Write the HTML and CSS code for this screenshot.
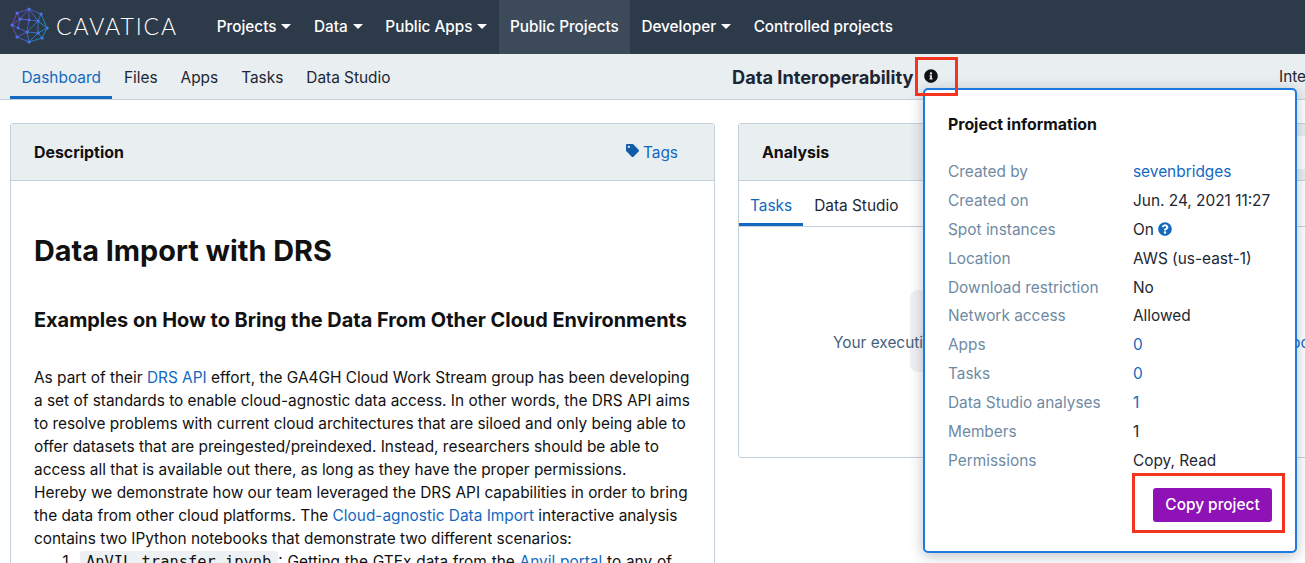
FILE: index.html
```html
<!DOCTYPE html>
<html lang="en">
<head>
    <meta charset="UTF-8">
    <meta name="viewport" content="width=device-width, initial-scale=1.0">
    <title>Data Interoperability</title>
    <link rel="stylesheet" href="styles.css">
</head>
<body>

<!-- Top navigation -->
<header class="topbar">
    <a class="logo">
        <svg class="logo-mark" width="40" height="40" viewBox="0 0 40 40">
            <defs>
                <linearGradient id="mark" x1="0" y1="0" x2="1" y2="0.4">
                    <stop offset="0" stop-color="#ad35ee"/>
                    <stop offset="0.5" stop-color="#5a62ea"/>
                    <stop offset="1" stop-color="#12aef0"/>
                </linearGradient>
            </defs>
            <path class="mesh" d="M19 2 7 6 2 18 7 30 19 35 32 31 37 21 31 7 19 2M7 6 10 12 19 13 28 14 31 7M19 2 19 13 10 12 2 18 8 21 17 25 7 30M10 12 8 21M19 2 10 12M19 2 28 14 37 21 28 26 32 31M28 14 28 26 17 25 19 35M19 13 17 25M28 14 17 25M28 26 19 35" stroke="url(#mark)"/>
            <g fill="url(#mark)">
                <circle cx="19" cy="2" r="1.6"/><circle cx="7" cy="6" r="1.6"/><circle cx="31" cy="7" r="1.6"/>
                <circle cx="10" cy="12" r="1.6"/><circle cx="19" cy="13" r="1.3"/><circle cx="28" cy="14" r="1.6"/>
                <circle cx="2" cy="18" r="1.6"/><circle cx="8" cy="21" r="1.3"/><circle cx="37" cy="21" r="1.6"/>
                <circle cx="17" cy="25" r="1.6"/><circle cx="28" cy="26" r="1.6"/><circle cx="7" cy="30" r="1.6"/>
                <circle cx="32" cy="31" r="1.6"/><circle cx="19" cy="35" r="1.6"/>
            </g>
        </svg>
        <span class="logo-text">CAVATICA</span>
    </a>
    <nav class="mainnav">
        <a>Projects <i class="caret"></i></a>
        <a>Data <i class="caret"></i></a>
        <a>Public Apps <i class="caret"></i></a>
        <a class="current">Public Projects</a>
        <a>Developer <i class="caret"></i></a>
        <a>Controlled projects</a>
    </nav>
</header>

<!-- Project tabs -->
<div class="subbar">
    <div class="tabs">
        <a class="active">Dashboard</a>
        <a>Files</a>
        <a>Apps</a>
        <a>Tasks</a>
        <a>Data Studio</a>
    </div>
    <div class="project-name">
        <strong>Data Interoperability</strong>
        <svg class="info-icon" width="14" height="14" viewBox="0 0 512 512"><path d="M256 8C119.043 8 8 119.083 8 256c0 136.997 111.043 248 248 248s248-111.003 248-248C504 119.083 392.957 8 256 8zm0 110c23.196 0 42 18.804 42 42s-18.804 42-42 42-42-18.804-42-42 18.804-42 42-42zm56 254c0 6.627-5.373 12-12 12h-88c-6.627 0-12-5.373-12-12v-24c0-6.627 5.373-12 12-12h12v-64h-12c-6.627 0-12-5.373-12-12v-24c0-6.627 5.373-12 12-12h64c6.627 0 12 5.373 12 12v100h12c6.627 0 12 5.373 12 12v24z"/></svg>
    </div>
    <span class="sub-right">Interoperability</span>
</div>

<main class="content">
    <section class="card card-left">
        <div class="card-head">
            <h3>Description</h3>
            <a class="tags">
                <svg width="13" height="13" viewBox="0 0 512 512"><path d="M0 252.118V48C0 21.49 21.49 0 48 0h204.118a48 48 0 0 1 33.941 14.059l211.882 211.882c18.745 18.745 18.745 49.137 0 67.882L293.823 497.941c-18.745 18.745-49.137 18.745-67.882 0L14.059 286.059A48 48 0 0 1 0 252.118zM112 64c-26.51 0-48 21.49-48 48s21.49 48 48 48 48-21.49 48-48-21.49-48-48-48z"/></svg>
                Tags
            </a>
        </div>
        <div class="markdown">
            <h1>Data Import with DRS</h1>
            <h2>Examples on How to Bring the Data From Other Cloud Environments</h2>
            <p>As part of their <a>DRS API</a> effort, the GA4GH Cloud Work Stream group has been developing<br>
            a set of standards to enable cloud-agnostic data access. In other words, the DRS API aims<br>
            to resolve problems with current cloud architectures that are siloed and only being able to<br>
            offer datasets that are preingested/preindexed. Instead, researchers should be able to<br>
            access all that is available out there, as long as they have the proper permissions.<br>
            Hereby we demonstrate how our team leveraged the DRS API capabilities in order to bring<br>
            the data from other cloud platforms. The <a>Cloud-agnostic Data Import</a> interactive analysis<br>
            contains two IPython notebooks that demonstrate two different scenarios:</p>
            <ol>
                <li><code>AnVIL_transfer.ipynb</code>: Getting the GTEx data from the <a>Anvil portal</a> to any of</li>
            </ol>
        </div>
    </section>

    <section class="card card-right">
        <div class="card-head">
            <h3>Analysis</h3>
            <div class="head-action"></div>
        </div>
        <div class="tabs inner-tabs">
            <a class="active">Tasks</a>
            <a>Data Studio</a>
        </div>
        <div class="empty">
            <div class="empty-icon"></div>
            <p><span>Your executions will appear here once you run a task</span><a>book</a></p>
        </div>
    </section>
</main>

<!-- Project information popover -->
<aside class="popover">
    <h4>Project information</h4>
    <dl class="info-list">
        <dt>Created by</dt><dd><a>sevenbridges</a></dd>
        <dt>Created on</dt><dd>Jun. 24, 2021 11:27</dd>
        <dt>Spot instances</dt>
        <dd>On
            <svg class="help-icon" width="14" height="14" viewBox="0 0 512 512"><path d="M504 256c0 136.997-111.043 248-248 248S8 392.997 8 256C8 119.083 119.043 8 256 8s248 111.083 248 248zM262.655 90c-54.497 0-89.255 22.957-116.549 63.758-3.536 5.286-2.353 12.415 2.715 16.258l34.699 26.31c5.205 3.947 12.621 3.008 16.665-2.122 17.864-22.658 30.113-35.797 57.303-35.797 20.429 0 45.698 13.148 45.698 32.958 0 14.976-12.363 22.667-32.534 33.976C247.128 238.528 216 254.941 216 296v4c0 6.627 5.373 12 12 12h56c6.627 0 12-5.373 12-12v-1.333c0-28.462 83.186-29.647 83.186-106.667 0-58.002-60.165-111-116.531-111zM256 338c-25.365 0-46 20.635-46 46 0 25.364 20.635 46 46 46s46-20.636 46-46c0-25.365-20.635-46-46-46z"/></svg>
        </dd>
        <dt>Location</dt><dd>AWS (us-east-1)</dd>
        <dt>Download restriction</dt><dd>No</dd>
        <dt>Network access</dt><dd>Allowed</dd>
        <dt>Apps</dt><dd><a>0</a></dd>
        <dt>Tasks</dt><dd><a>0</a></dd>
        <dt>Data Studio analyses</dt><dd><a>1</a></dd>
        <dt>Members</dt><dd>1</dd>
        <dt>Permissions</dt><dd>Copy, Read</dd>
    </dl>
    <div class="popover-foot">
        <button class="copy-btn">Copy project</button>
    </div>
</aside>

<!-- Red annotation boxes drawn on the screenshot -->
<div class="mark mark-info"></div>
<div class="mark mark-copy"></div>

</body>
</html>
```

FILE: styles.css
```css
* {
    box-sizing: border-box;
}
html, body {
    height: 563px;
    overflow: hidden;
}
body {
    margin: 0;
    width: 1305px;
    position: relative;
    font-family: 'Inter', 'Liberation Sans', sans-serif;
    font-size: 15.4px;
    line-height: 23px;
    color: #1c2733;
    background: #fff;
}
a {
    color: #1368bf;
    text-decoration: none;
}

/* top bar */
.topbar {
    height: 54px;
    background: #2d3a4a;
    display: flex;
    align-items: center;
}
.logo {
    width: 205.5px;
    padding-left: 10px;
    display: flex;
    align-items: center;
    gap: 6px;
}
.logo-mark {
    flex: none;
}
.mesh {
    fill: none;
    stroke-width: 0.7;
}
.logo-text {
    font-family: 'Lato', sans-serif;
    font-weight: 300;
    font-size: 23px;
    letter-spacing: 1.9px;
    color: #fff;
    margin-top: -2px;
}
.mainnav {
    display: flex;
    height: 100%;
}
.mainnav a {
    color: #fff;
    font-size: 15.3px;
    font-weight: 500;
    padding: 0 11.3px 2px;
    display: flex;
    align-items: center;
    gap: 5px;
}
.mainnav a.current {
    background: #3d4a5a;
}
.caret {
    width: 0;
    height: 0;
    border-left: 5px solid transparent;
    border-right: 5px solid transparent;
    border-top: 5px solid #fff;
}

/* project bar */
.subbar {
    height: 46px;
    background: #e9eef1;
    border-bottom: 1px solid #c4d0da;
    display: flex;
    padding-left: 10px;
    position: relative;
}
.tabs {
    display: flex;
    height: 100%;
}
.tabs a {
    color: #1c2733;
    padding: 2px 11.5px 0;
    display: flex;
    align-items: center;
}
.tabs a.active {
    color: #1368bf;
    padding-top: 5px;
    border-bottom: 3px solid #1368bf;
}
.project-name {
    position: absolute;
    left: 732px;
    top: 1px;
    height: 100%;
    display: flex;
    align-items: center;
    gap: 11px;
    font-size: 18.2px;
}
.project-name strong {
    font-weight: 700;
}
.info-icon {
    fill: #111;
    margin-top: -4px;
}
.sub-right {
    position: absolute;
    left: 1279px;
    top: 11px;
    white-space: nowrap;
}

/* page content */
.content {
    display: flex;
    gap: 23px;
    padding: 23px 0 0 10px;
    align-items: flex-start;
}
.card {
    flex: none;
    background: #fff;
    border: 1px solid #c4d0da;
    border-radius: 3px;
}
.card-left {
    width: 705px;
    height: 600px;
}
.card-right {
    width: 620px;
    height: 335px;
}
.card-head {
    height: 57px;
    background: #e9eef1;
    border-bottom: 1px solid #c4d0da;
    padding: 0 36px 0 23px;
    display: flex;
    align-items: center;
    justify-content: space-between;
}
.card-head h3 {
    margin: 0;
    font-size: 15.9px;
    font-weight: 700;
    color: #111;
}
.head-action {
    width: 60px;
    height: 33px;
    background: #fff;
}
.tags {
    display: flex;
    align-items: center;
    gap: 4px;
}
.tags svg {
    fill: #0f5ca8;
    margin-top: -3px;
}

.markdown {
    padding: 0 15px 0 23px;
    color: #111;
}
.markdown h1 {
    margin: 51px 0 0;
    font-size: 28.8px;
    line-height: 38px;
    font-weight: 700;
}
.markdown h2 {
    margin: 35px 0 0;
    font-size: 19.9px;
    line-height: 30px;
    font-weight: 700;
    white-space: nowrap;
}
.markdown p {
    margin: 31px 0 0;
    white-space: nowrap;
}
.markdown ol {
    margin: 0;
    padding-left: 46px;
    word-spacing: 0.5px;
}
.markdown code {
    font-family: 'DejaVu Sans Mono', 'Liberation Mono', monospace;
    font-size: 15.4px;
    background: #eef1f4;
    border-radius: 3px;
    padding: 2px 7px 2px 6px;
}

.inner-tabs {
    height: 46px;
    border-bottom: 1px solid #c4d0da;
    padding-left: 0;
}
.inner-tabs a {
    padding: 4px 11px 0;
}
.inner-tabs a.active {
    padding-top: 7px;
}
.empty {
    position: relative;
    padding: 104px 0 0 94px;
    color: #45607a;
    white-space: nowrap;
}
.empty p {
    margin: 0;
    position: relative;
}
.empty p span {
    display: inline-block;
    width: 458px;
}
.empty-icon {
    position: absolute;
    left: 171px;
    top: 63px;
    width: 90px;
    height: 82px;
    border-radius: 8px;
    background: #eff1f4;
}

/* popover */
.popover {
    position: absolute;
    left: 923px;
    top: 88px;
    width: 374px;
    height: 465px;
    background: #fff;
    border: 2px solid #1c7ae0;
    border-radius: 5px;
    box-shadow: 0 3px 14px rgba(40, 50, 70, 0.3);
    padding: 23px 23px 0;
}
.popover h4 {
    margin: 0;
    font-size: 15.9px;
    font-weight: 700;
    color: #111;
}
.info-list {
    margin: 24px 0 0;
    display: grid;
    grid-template-columns: 185px 1fr;
    grid-auto-rows: 28.9px;
}
.info-list dt {
    color: #6f8aa3;
}
.info-list dd {
    margin: 0;
    color: #1c2733;
}
.help-icon {
    fill: #1368bf;
    vertical-align: -1px;
}
.popover-foot {
    display: flex;
    justify-content: flex-end;
    margin-top: 10px;
}
.copy-btn {
    width: 119px;
    height: 34px;
    border: none;
    border-radius: 3px;
    background: #8e12b5;
    color: #fff;
    font-family: inherit;
    font-size: 15.4px;
    font-weight: 500;
    padding: 0;
}

/* red annotations */
.mark {
    position: absolute;
    border: 3px solid #f5341f;
}
.mark-info {
    left: 915px;
    top: 57px;
    width: 43px;
    height: 39px;
}
.mark-copy {
    left: 1132px;
    top: 473px;
    width: 153px;
    height: 60px;
}
```
